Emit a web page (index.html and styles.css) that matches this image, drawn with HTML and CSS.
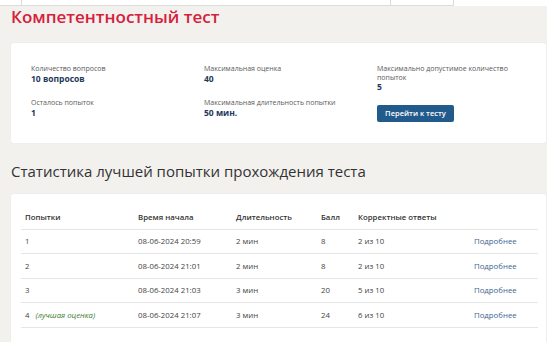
FILE: index.html
```html
<!DOCTYPE html>
<html lang="ru">
<head>
  <meta charset="UTF-8">
  <title>Компетентностный тест</title>
  <link rel="stylesheet" href="styles.css">
</head>
<body>

<!--верхние вкладки-->
<div class="tabs">
  <div class="tab tab-a"></div>
  <div class="tab tab-b"></div>
  <div class="tab tab-c"></div>
</div>

<div class="page">
  <h1 class="title">Компетентностный тест</h1>

  <!--информация о тесте-->
  <div class="card info">
    <div class="item">
      <div class="label">Количество вопросов</div>
      <div class="value">10 вопросов</div>
    </div>
    <div class="item">
      <div class="label">Максимальная оценка</div>
      <div class="value">40</div>
    </div>
    <div class="item">
      <div class="label">Максимально допустимое количество попыток</div>
      <div class="value">5</div>
    </div>
    <div class="item">
      <div class="label">Осталось попыток</div>
      <div class="value">1</div>
    </div>
    <div class="item">
      <div class="label">Максимальная длительность попытки</div>
      <div class="value">50 мин.</div>
    </div>
    <div class="item">
      <a class="btn" href="#">Перейти к тесту</a>
    </div>
  </div>

  <h2 class="subtitle">Статистика лучшей попытки прохождения теста</h2>

  <!--таблица попыток-->
  <div class="card stats">
    <table>
      <thead>
        <tr>
          <th class="c1">Попытки</th>
          <th class="c2">Время начала</th>
          <th class="c3">Длительность</th>
          <th class="c4">Балл</th>
          <th class="c5">Корректные ответы</th>
          <th class="c6"></th>
        </tr>
      </thead>
      <tbody>
        <tr>
          <td>1</td>
          <td>08-06-2024 20:59</td>
          <td>2 мин</td>
          <td>8</td>
          <td>2 из 10</td>
          <td><a href="#">Подробнее</a></td>
        </tr>
        <tr>
          <td>2</td>
          <td>08-06-2024 21:01</td>
          <td>2 мин</td>
          <td>8</td>
          <td>2 из 10</td>
          <td><a href="#">Подробнее</a></td>
        </tr>
        <tr>
          <td>3</td>
          <td>08-06-2024 21:03</td>
          <td>3 мин</td>
          <td>20</td>
          <td>5 из 10</td>
          <td><a href="#">Подробнее</a></td>
        </tr>
        <tr>
          <td>4 <span class="best">(лучшая оценка)</span></td>
          <td>08-06-2024 21:07</td>
          <td>3 мин</td>
          <td>24</td>
          <td>6 из 10</td>
          <td><a href="#">Подробнее</a></td>
        </tr>
      </tbody>
    </table>
  </div>
</div>

</body>
</html>
```

FILE: styles.css
```css
* {
  margin: 0;
  padding: 0;
  box-sizing: border-box;
}

body {
  background-color: #fff;
  font-family: "Open Sans", "Liberation Sans", sans-serif;
  color: #444;
}

/*вкладки сверху*/
.tabs {
  display: flex;
  width: 454px;
  height: 6px;
  border-bottom: 1px solid #dcdcdc;
}

.tab {
  border-right: 1px solid #dcdcdc;
}

.tab-a {
  width: 22px;
}

.tab-b {
  width: 369px;
}

.tab-c {
  width: 63px;
}

.page {
  width: 547px;
  height: 336px;
  background-color: #f2f1ee;
  padding: 0 1px 0 11px;
  overflow: hidden;
}

.title {
  font-size: 17px;
  line-height: 22px;
  font-weight: 600;
  color: #d6203c;
}

.card {
  background-color: #fff;
  border-radius: 2px;
  box-shadow: 0 0 1px rgba(0, 0, 0, .12);
}

/*блок с информацией*/
.info {
  margin-top: 15px;
  display: grid;
  grid-template-columns: 173px 173px 1fr;
  row-gap: 8px;
  padding: 22px 20px 21px;
}

.label {
  font-size: 7px;
  line-height: 8.5px;
  color: #5a5a5a;
  width: 140px;
}

.value {
  font-size: 8.5px;
  line-height: 9px;
  font-weight: 700;
  color: #23395b;
}

.btn {
  display: inline-block;
  width: 77px;
  height: 17px;
  margin-top: 1px;
  line-height: 17px;
  text-align: center;
  font-size: 7.5px;
  font-weight: 600;
  color: #fff;
  text-decoration: none;
  background-color: #235a8c;
  border-radius: 2px;
}

.subtitle {
  margin: 18px 0 13px;
  font-size: 15px;
  line-height: 20px;
  font-weight: 400;
  color: #333;
}

/*таблица*/
.stats {
  padding: 11px 8px 20px 10px;
}

table {
  width: 100%;
  border-collapse: collapse;
  font-size: 7.8px;
}

th {
  text-align: left;
  font-weight: 600;
  color: #333;
  height: 24px;
  padding-left: 4px;
  border-bottom: 1px solid #e6e6e6;
}

td {
  height: 24.5px;
  padding-left: 4px;
  border-bottom: 1px solid #e6e6e6;
}

tbody tr {
  height: 24.5px;
}

.c1 {
  width: 113px;
}

.c2 {
  width: 98px;
}

.c3 {
  width: 85px;
}

.c4 {
  width: 37px;
}

.c5 {
  width: 116px;
}

.best {
  margin-left: 4px;
  font-style: italic;
  color: #3c7d2d;
}

td a {
  color: #3d6593;
  text-decoration: none;
}
```
